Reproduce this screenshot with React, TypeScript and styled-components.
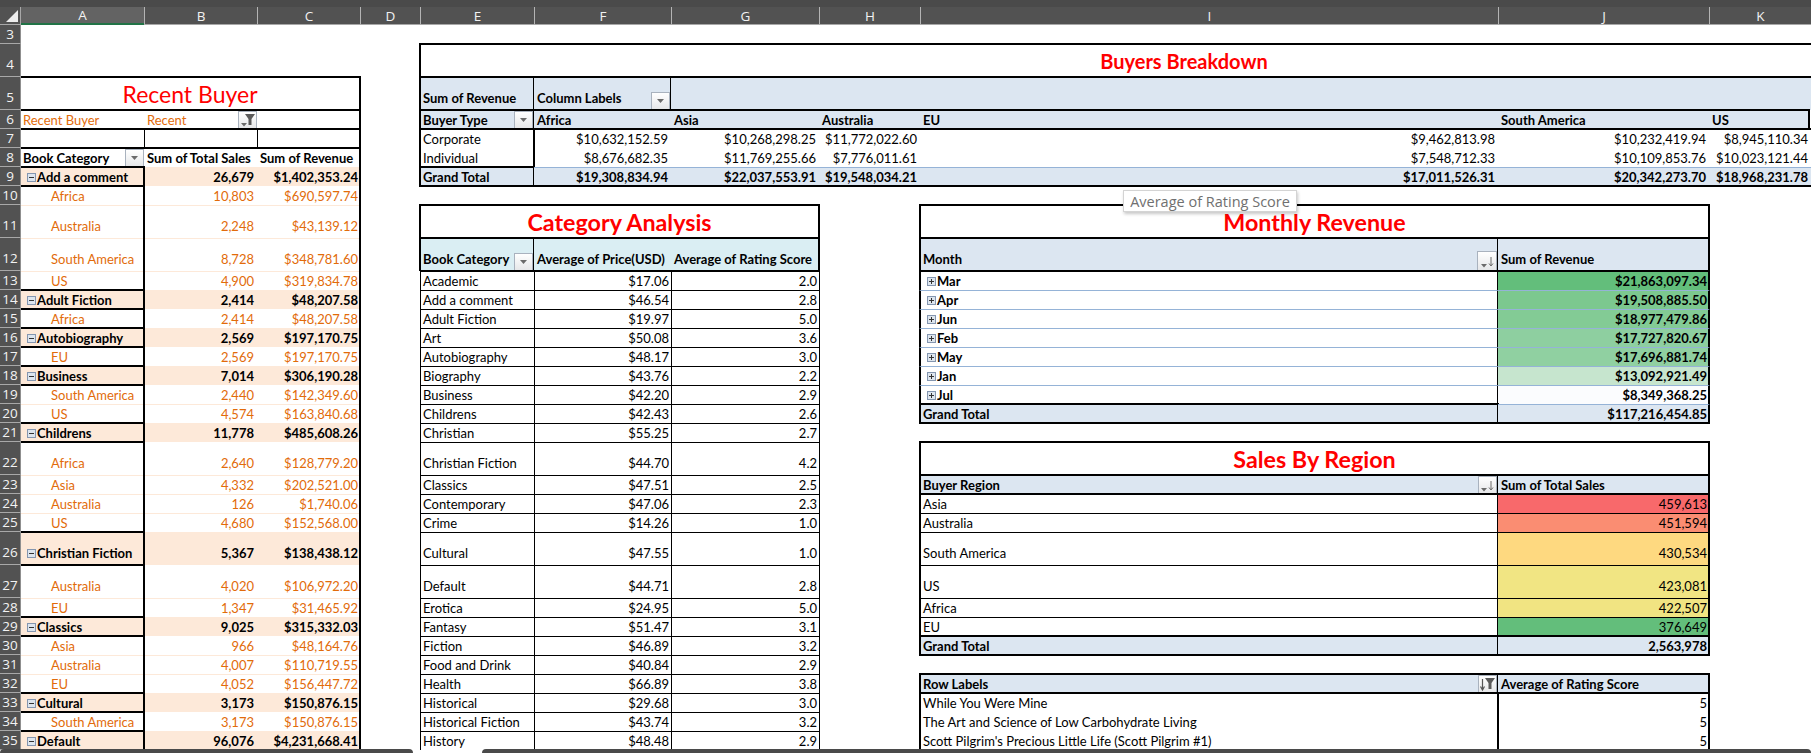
import React from "react";
import styled, { createGlobalStyle, css } from "styled-components";

const GlobalStyle = createGlobalStyle`
  html, body { margin: 0; height: 753px; overflow: hidden; background: #fff; }
  #root { height: 753px; }
`;

const columnLetters = ["A", "B", "C", "D", "E", "F", "G", "H", "I", "J", "K"];
const columnWidths = [123, 113, 103, 60, 114, 137, 148, 101, 578, 211, 102];
const rowHeights: Record<number, number> = { 4: 33, 5: 33, 11: 33, 12: 33, 22: 33, 26: 33, 27: 33 };
const rowNumbers = Array.from({ length: 33 }, (_, i) => i + 3);

const colIndex = (letter: string) => columnLetters.indexOf(letter) + 2;
const isTall = (row: number) => rowHeights[row] === 33;

type Line = "thick" | "thin" | "blue" | "peach";
const lineValue: Record<Line, string> = {
  thick: "2px solid #000",
  thin: "1px solid #000",
  blue: "1px solid #95b3d7",
  peach: "1px solid #fde9d9",
};

interface CellProps {
  $col: string;
  $row: number;
  $span?: number;
  $t?: Line;
  $b?: Line;
  $l?: Line;
  $r?: Line;
  $bg?: string;
  $color?: string;
  $bold?: boolean;
  $end?: boolean;
}

const Page = styled.div`
  position: relative;
  width: 1811px;
  height: 753px;
  overflow: hidden;
  font-family: Lato, "Liberation Sans", sans-serif;
  font-size: 13px;
  color: #000;
`;

const TopStrip = styled.div`
  height: 7px;
  background: #4a4a4a;
`;

const Sheet = styled.div`
  display: grid;
  grid-template-columns: 21px ${columnWidths.map((w) => `${w}px`).join(" ")};
  grid-template-rows: 18px ${rowNumbers.map((n) => `${rowHeights[n] || 19}px`).join(" ")};
`;

const Corner = styled.div`
  grid-column: 1;
  grid-row: 1;
  background: #525252;
  border-bottom: 1px solid #a8a8a8;
  border-right: 1px solid #a8a8a8;
  box-sizing: border-box;
  display: flex;
  align-items: flex-end;
  justify-content: flex-end;
  padding: 0 2px 2px 0;
`;

const ColumnHead = styled.div<{ $selected?: boolean; $pos: number }>`
  grid-column: ${(p) => p.$pos};
  grid-row: 1;
  box-sizing: border-box;
  display: flex;
  align-items: center;
  justify-content: center;
  background: ${(p) => (p.$selected ? "#636363" : "#525252")};
  border-left: ${(p) => (p.$selected ? "none" : "1px solid #b4b4b4")};
  border-bottom: ${(p) => (p.$selected ? "2px solid #217346" : "1px solid #a8a8a8")};
  color: #f2f2f2;
  font-family: "Open Sans", sans-serif;
  font-size: 13.5px;
`;

const RowHead = styled.div<{ $pos: number; $tall: boolean }>`
  grid-column: 1;
  grid-row: ${(p) => p.$pos};
  box-sizing: border-box;
  display: flex;
  align-items: ${(p) => (p.$tall ? "flex-end" : "center")};
  justify-content: center;
  padding-bottom: ${(p) => (p.$tall ? 3 : 0)}px;
  background: #525252;
  border-right: 1px solid #8f8f8f;
  border-bottom: 1px solid #a8a8a8;
  color: #f2f2f2;
  font-family: "Open Sans", sans-serif;
  font-size: 13.5px;
  line-height: 18px;
`;

// thick lines straddle the row or column boundary, thin ones start on it
const edges = (p: CellProps) => css`
  ${p.$t && `border-top: ${lineValue[p.$t]};`}
  ${p.$t === "thick" && "margin-top: -1px; z-index: 1;"}
  ${p.$l && `border-left: ${lineValue[p.$l]};`}
  ${p.$l === "thick" && "margin-left: -1px; z-index: 1;"}
  ${p.$b === "thick"
    ? "box-shadow: inset 0 -1px 0 #000, 0 1px 0 #000; z-index: 1;"
    : p.$b && `border-bottom: ${lineValue[p.$b]}; margin-bottom: -1px; z-index: 1;`}
  ${p.$r && `border-right: ${lineValue[p.$r]}; margin-right: -1px; z-index: 1;`}
`;

const endPadding = (p: CellProps) => {
  if (!p.$end) return 2;
  if (p.$r === "thick") return 1;
  return p.$r ? 2 : 3;
};
const startPadding = (p: CellProps) => {
  if (p.$end) return 0;
  return p.$l || p.$col === "A" ? 2 : 3;
};

const Cell = styled.div<CellProps>`
  grid-column: ${(p) => colIndex(p.$col)} / span ${(p) => p.$span || 1};
  grid-row: ${(p) => p.$row - 1};
  position: relative;
  box-sizing: border-box;
  min-width: 0;
  display: flex;
  align-items: flex-end;
  justify-content: ${(p) => (p.$end ? "flex-end" : "flex-start")};
  padding: 0 ${endPadding}px ${(p) => (isTall(p.$row) ? 3 : 0)}px ${startPadding}px;
  background: ${(p) => p.$bg || "transparent"};
  color: ${(p) => p.$color || "#000"};
  font-weight: ${(p) => (p.$bold ? 700 : 400)};
  line-height: 18px;
  white-space: nowrap;
  ${edges}
`;

const TitleCell = styled(Cell)`
  align-items: center;
  justify-content: center;
  padding-bottom: 0;
  color: #f00;
  font-size: 23.3px;
  font-weight: 700;
  line-height: 30px;
`;

const LightTitle = styled(TitleCell)`
  font-size: 23px;
  font-weight: 400;
`;

const OffsetTitle = styled(TitleCell)`
  padding-left: 138px;
  font-size: 20px;
`;

const EdgeHead = styled(Cell)`
  border-right: 2px solid #000;
  margin-right: 1px;
`;

const Indented = styled(Cell)`
  padding-left: 30px;
`;

const Dropdown = styled.span<{ $big?: boolean }>`
  position: absolute;
  right: 0;
  bottom: 0;
  box-sizing: border-box;
  width: ${(p) => (p.$big ? 20 : 19)}px;
  height: ${(p) => (p.$big ? 20 : 18)}px;
  display: flex;
  align-items: center;
  justify-content: center;
  border: 1px solid #a9b2be;
  background: linear-gradient(#fff, #e6e7e9);
`;

const Toggle = styled.span`
  flex: none;
  box-sizing: border-box;
  width: 9px;
  height: 9px;
  margin: 0 1px 4px 4px;
  border: 1px solid #8496b0;
  background: #dde5ee;
`;

const ToggleSvg = styled.svg`
  display: block;
`;

const Tooltip = styled.div`
  position: absolute;
  left: 1123px;
  top: 190px;
  box-sizing: border-box;
  width: 174px;
  height: 22px;
  display: flex;
  align-items: center;
  justify-content: center;
  background: #fff;
  border: 1px solid #d4d4d4;
  box-shadow: 1px 2px 3px rgba(0, 0, 0, 0.22);
  color: #707070;
  font-family: "Open Sans", sans-serif;
  font-size: 14.5px;
  z-index: 3;
`;

const ScrollBar = styled.div<{ $left: number; $width: number }>`
  position: absolute;
  left: ${(p) => p.$left}px;
  bottom: 0;
  width: ${(p) => p.$width}px;
  height: 4px;
  background: #4a4a4a;
  border-radius: 5px 5px 0 0;
  z-index: 3;
`;

const CornerMark = () => (
  <svg width="12" height="12" viewBox="0 0 12 12">
    <polygon points="12,0 12,12 0,12" fill="#ececec" />
  </svg>
);

type ButtonKind = "menu" | "filter" | "sort" | "sortFilter";

const ButtonIcon = ({ kind }: { kind: ButtonKind }) => (
  <svg width="17" height="16" viewBox="0 0 17 16">
    {kind !== "sortFilter" && (
      <polygon
        points={kind === "menu" ? "5,6 12,6 8.5,10" : "2,11 8,11 5,14.5"}
        fill="#6b6b6b"
      />
    )}
    {(kind === "filter" || kind === "sortFilter") && (
      <polygon points="6,2 16,2 12.5,7 12.5,13 9.5,13 9.5,7" fill="#5a5a5a" />
    )}
    {kind === "sort" && (
      <path d="M12 4V12.5M10 10.5L12 13L14 10.5" stroke="#6b6b6b" strokeWidth="1" fill="none" />
    )}
    {kind === "sortFilter" && (
      <path d="M3.5 3V13M1.5 10.5L3.5 14L5.5 10.5" stroke="#555" strokeWidth="1.2" fill="none" />
    )}
  </svg>
);

const FilterButton = ({ kind = "menu", big }: { kind?: ButtonKind; big?: boolean }) => (
  <Dropdown $big={big}>
    <ButtonIcon kind={kind} />
  </Dropdown>
);

const ExpandBox = ({ open }: { open?: boolean }) => (
  <Toggle>
    <ToggleSvg width="7" height="7" viewBox="0 0 7 7">
      <path d={open ? "M1 3.5H6" : "M1 3.5H6M3.5 1V6"} stroke="#333" strokeWidth="1" fill="none" />
    </ToggleSvg>
  </Toggle>
);

const HEAD = "#dce6f1";
const CYAN = "#daeef3";
const PEACH = "#fde9d9";
const ORANGE = "#e26b0a";

const recentGroups: [string, string, string, [string, string, string][]][] = [
  ["Add a comment", "26,679", "$1,402,353.24", [
    ["Africa", "10,803", "$690,597.74"],
    ["Australia", "2,248", "$43,139.12"],
    ["South America", "8,728", "$348,781.60"],
    ["US", "4,900", "$319,834.78"],
  ]],
  ["Adult Fiction", "2,414", "$48,207.58", [["Africa", "2,414", "$48,207.58"]]],
  ["Autobiography", "2,569", "$197,170.75", [["EU", "2,569", "$197,170.75"]]],
  ["Business", "7,014", "$306,190.28", [
    ["South America", "2,440", "$142,349.60"],
    ["US", "4,574", "$163,840.68"],
  ]],
  ["Childrens", "11,778", "$485,608.26", [
    ["Africa", "2,640", "$128,779.20"],
    ["Asia", "4,332", "$202,521.00"],
    ["Australia", "126", "$1,740.06"],
    ["US", "4,680", "$152,568.00"],
  ]],
  ["Christian Fiction", "5,367", "$138,438.12", [
    ["Australia", "4,020", "$106,972.20"],
    ["EU", "1,347", "$31,465.92"],
  ]],
  ["Classics", "9,025", "$315,332.03", [
    ["Asia", "966", "$48,164.76"],
    ["Australia", "4,007", "$110,719.55"],
    ["EU", "4,052", "$156,447.72"],
  ]],
  ["Cultural", "3,173", "$150,876.15", [["South America", "3,173", "$150,876.15"]]],
  ["Default", "96,076", "$4,231,668.41", []],
];

const RecentBuyer = () => {
  let row = 9;
  const rows: React.ReactNode[] = [];
  recentGroups.forEach(([name, sales, revenue, children]) => {
    const r = row++;
    rows.push(
      <Cell key={`a${r}`} $col="A" $row={r} $bg={PEACH} $bold $t="thick" $r="thick">
        <ExpandBox open />
        {name}
      </Cell>,
      <Cell key={`b${r}`} $col="B" $row={r} $bg={PEACH} $bold $end>{sales}</Cell>,
      <Cell key={`c${r}`} $col="C" $row={r} $bg={PEACH} $bold $end $r="thick">{revenue}</Cell>
    );
    children.forEach(([label, s, v], i) => {
      const c = row++;
      rows.push(
        <Indented key={`a${c}`} $col="A" $row={c} $color={ORANGE} $t={i === 0 ? "thick" : undefined} $b="peach" $r="thick">{label}</Indented>,
        <Cell key={`b${c}`} $col="B" $row={c} $color={ORANGE} $end $b="peach">{s}</Cell>,
        <Cell key={`c${c}`} $col="C" $row={c} $color={ORANGE} $end $b="peach" $r="thick">{v}</Cell>
      );
    });
  });
  return (
    <>
      <LightTitle $col="A" $row={5} $span={3} $t="thick" $r="thick">Recent Buyer</LightTitle>
      <Cell $col="A" $row={6} $color={ORANGE} $t="thick">Recent Buyer</Cell>
      <Cell $col="B" $row={6} $color={ORANGE} $t="thick">Recent<FilterButton kind="filter" /></Cell>
      <Cell $col="C" $row={6} $t="thick" $r="thick" />
      <Cell $col="A" $row={7} $t="thick" $r="thin" />
      <Cell $col="B" $row={7} $t="thick" $r="thin" />
      <Cell $col="C" $row={7} $t="thick" $r="thick" />
      <Cell $col="A" $row={8} $t="thick" $bold>Book Category<FilterButton /></Cell>
      <Cell $col="B" $row={8} $t="thick" $bold>Sum of Total Sales</Cell>
      <Cell $col="C" $row={8} $t="thick" $r="thick" $bold>Sum of Revenue</Cell>
      {rows}
    </>
  );
};

const buyerColumns = ["F", "G", "H", "I", "J", "K"];
const buyerHeads = ["Africa", "Asia", "Australia", "EU", "South America"];
const buyerRows: [string, string[]][] = [
  ["Corporate", ["$10,632,152.59", "$10,268,298.25", "$11,772,022.60", "$9,462,813.98", "$10,232,419.94", "$8,945,110.34"]],
  ["Individual", ["$8,676,682.35", "$11,769,255.66", "$7,776,011.61", "$7,548,712.33", "$10,109,853.76", "$10,023,121.44"]],
];
const buyerTotals = ["$19,308,834.94", "$22,037,553.91", "$19,548,034.21", "$17,011,526.31", "$20,342,273.70", "$18,968,231.78"];

const BuyersBreakdown = () => (
  <>
    <OffsetTitle $col="E" $row={4} $span={7} $t="thick" $l="thick">Buyers Breakdown</OffsetTitle>
    <Cell $col="E" $row={5} $bg={HEAD} $bold $t="thick" $l="thick" $r="thick">Sum of Revenue</Cell>
    <Cell $col="F" $row={5} $bg={HEAD} $bold $t="thick" $r="thick">Column Labels<FilterButton /></Cell>
    <Cell $col="G" $row={5} $span={5} $bg={HEAD} $t="thick" />
    <Cell $col="E" $row={6} $bg={HEAD} $bold $t="thick" $l="thick" $r="thick">Buyer Type<FilterButton /></Cell>
    {buyerHeads.map((label, i) => (
      <Cell key={label} $col={buyerColumns[i]} $row={6} $bg={HEAD} $bold $t="thick">{label}</Cell>
    ))}
    <EdgeHead $col="K" $row={6} $bg={HEAD} $bold $t="thick">US</EdgeHead>
    {buyerRows.map(([label, values], r) => (
      <React.Fragment key={label}>
        <Cell $col="E" $row={7 + r} $t={r === 0 ? "thick" : undefined} $l="thick" $r="thick">{label}</Cell>
        {values.map((v, i) => (
          <Cell key={v} $col={buyerColumns[i]} $row={7 + r} $t={r === 0 ? "thick" : undefined} $end>{v}</Cell>
        ))}
      </React.Fragment>
    ))}
    <Cell $col="E" $row={9} $bg={HEAD} $bold $t="thick" $l="thick" $b="thick" $r="thick">Grand Total</Cell>
    {buyerTotals.map((v, i) => (
      <Cell key={v} $col={buyerColumns[i]} $row={9} $bg={HEAD} $bold $t="blue" $b="thick" $end>{v}</Cell>
    ))}
  </>
);

const categories: [string, string, string][] = [
  ["Academic", "$17.06", "2.0"], ["Add a comment", "$46.54", "2.8"], ["Adult Fiction", "$19.97", "5.0"],
  ["Art", "$50.08", "3.6"], ["Autobiography", "$48.17", "3.0"], ["Biography", "$43.76", "2.2"],
  ["Business", "$42.20", "2.9"], ["Childrens", "$42.43", "2.6"], ["Christian", "$55.25", "2.7"],
  ["Christian Fiction", "$44.70", "4.2"], ["Classics", "$47.51", "2.5"], ["Contemporary", "$47.06", "2.3"],
  ["Crime", "$14.26", "1.0"], ["Cultural", "$47.55", "1.0"], ["Default", "$44.71", "2.8"],
  ["Erotica", "$24.95", "5.0"], ["Fantasy", "$51.47", "3.1"], ["Fiction", "$46.89", "3.2"],
  ["Food and Drink", "$40.84", "2.9"], ["Health", "$66.89", "3.8"], ["Historical", "$29.68", "3.0"],
  ["Historical Fiction", "$43.74", "3.2"], ["History", "$48.48", "2.9"],
];

const CategoryAnalysis = () => (
  <>
    <TitleCell $col="E" $row={11} $span={3} $t="thick" $l="thick" $r="thick">Category Analysis</TitleCell>
    <Cell $col="E" $row={12} $bg={CYAN} $bold $t="thick" $l="thick" $r="thick">Book Category<FilterButton /></Cell>
    <Cell $col="F" $row={12} $bg={CYAN} $bold $t="thick">Average of Price(USD)</Cell>
    <Cell $col="G" $row={12} $bg={CYAN} $bold $t="thick" $r="thick">Average of Rating Score</Cell>
    {categories.map(([name, price, score], i) => {
      const first = i === 0;
      return (
        <React.Fragment key={name}>
          <Cell $col="E" $row={13 + i} $t={first ? "thick" : "thin"} $l="thin" $r="thin">{name}</Cell>
          <Cell $col="F" $row={13 + i} $t={first ? "thick" : "thin"} $r="thin" $end>{price}</Cell>
          <Cell $col="G" $row={13 + i} $t={first ? "thick" : "thin"} $r="thin" $end>{score}</Cell>
        </React.Fragment>
      );
    })}
  </>
);

const months: [string, string, string][] = [
  ["Mar", "$21,863,097.34", "#63be7b"],
  ["Apr", "$19,508,885.50", "#7cc88f"],
  ["Jun", "$18,977,479.86", "#83cb95"],
  ["Feb", "$17,727,820.67", "#8ecfa0"],
  ["May", "$17,696,881.74", "#90d0a1"],
  ["Jan", "$13,092,921.49", "#c6e5ce"],
  ["Jul", "$8,349,368.25", "#fbfcfe"],
];

const MonthlyRevenue = () => (
  <>
    <TitleCell $col="I" $row={11} $span={2} $t="thick" $l="thick" $r="thick">Monthly Revenue</TitleCell>
    <Cell $col="I" $row={12} $bg={HEAD} $bold $t="thick" $l="thick" $r="thick">Month<FilterButton kind="sort" big /></Cell>
    <Cell $col="J" $row={12} $bg={HEAD} $bold $t="thick" $r="thick">Sum of Revenue</Cell>
    {months.map(([m, v, bg], i) => (
      <React.Fragment key={m}>
        <Cell $col="I" $row={13 + i} $bold $t={i === 0 ? "thick" : "blue"} $l="thick" $r="thick"><ExpandBox />{m}</Cell>
        <Cell $col="J" $row={13 + i} $bg={bg} $bold $end $t={i === 0 ? "thick" : "blue"} $r="thick">{v}</Cell>
      </React.Fragment>
    ))}
    <Cell $col="I" $row={20} $bg={HEAD} $bold $t="thick" $l="thick" $r="thick" $b="thick">Grand Total</Cell>
    <Cell $col="J" $row={20} $bg={HEAD} $bold $end $t="blue" $r="thick" $b="thick">$117,216,454.85</Cell>
  </>
);

const regions: [string, string, string][] = [
  ["Asia", "459,613", "#f8696b"],
  ["Australia", "451,594", "#fa8d72"],
  ["South America", "430,534", "#fed980"],
  ["US", "423,081", "#f1e583"],
  ["Africa", "422,507", "#f1e482"],
  ["EU", "376,649", "#63be7b"],
];

const SalesByRegion = () => (
  <>
    <TitleCell $col="I" $row={22} $span={2} $t="thick" $l="thick" $r="thick">Sales By Region</TitleCell>
    <Cell $col="I" $row={23} $bg={HEAD} $bold $t="thick" $l="thick" $r="thick">Buyer Region<FilterButton kind="sort" /></Cell>
    <Cell $col="J" $row={23} $bg={HEAD} $bold $t="thick" $r="thick">Sum of Total Sales</Cell>
    {regions.map(([name, v, bg], i) => (
      <React.Fragment key={name}>
        <Cell $col="I" $row={24 + i} $t={i === 0 ? "thick" : "thin"} $l="thick" $r="thick">{name}</Cell>
        <Cell $col="J" $row={24 + i} $bg={bg} $end $t={i === 0 ? "thick" : "thin"} $r="thick">{v}</Cell>
      </React.Fragment>
    ))}
    <Cell $col="I" $row={30} $bg={HEAD} $bold $t="thick" $l="thick" $r="thick" $b="thick">Grand Total</Cell>
    <Cell $col="J" $row={30} $bg={HEAD} $bold $end $t="thick" $r="thick" $b="thick">2,563,978</Cell>
  </>
);

const titles = [
  "While You Were Mine",
  "The Art and Science of Low Carbohydrate Living",
  "Scott Pilgrim's Precious Little Life (Scott Pilgrim #1)",
];

const TopRated = () => (
  <>
    <Cell $col="I" $row={32} $bg={HEAD} $bold $t="thick" $l="thick" $r="thick">Row Labels<FilterButton kind="sortFilter" /></Cell>
    <Cell $col="J" $row={32} $bg={HEAD} $bold $t="thick" $r="thick">Average of Rating Score</Cell>
    {titles.map((t, i) => (
      <React.Fragment key={t}>
        <Cell $col="I" $row={33 + i} $t={i === 0 ? "thick" : undefined} $l="thick" $r="thick">{t}</Cell>
        <Cell $col="J" $row={33 + i} $end $t={i === 0 ? "thick" : undefined} $r="thick">5</Cell>
      </React.Fragment>
    ))}
  </>
);

export default function App() {
  return (
    <Page>
      <GlobalStyle />
      <TopStrip />
      <Sheet>
        <Corner><CornerMark /></Corner>
        {columnLetters.map((letter, i) => (
          <ColumnHead key={letter} $pos={i + 2} $selected={letter === "A"}>{letter}</ColumnHead>
        ))}
        {rowNumbers.map((n) => (
          <RowHead key={n} $pos={n - 1} $tall={isTall(n)}>{n}</RowHead>
        ))}
        <RecentBuyer />
        <BuyersBreakdown />
        <CategoryAnalysis />
        <MonthlyRevenue />
        <SalesByRegion />
        <TopRated />
      </Sheet>
      <Tooltip>Average of Rating Score</Tooltip>
      <ScrollBar $left={0} $width={413} />
      <ScrollBar $left={482} $width={1329} />
    </Page>
  );
}
